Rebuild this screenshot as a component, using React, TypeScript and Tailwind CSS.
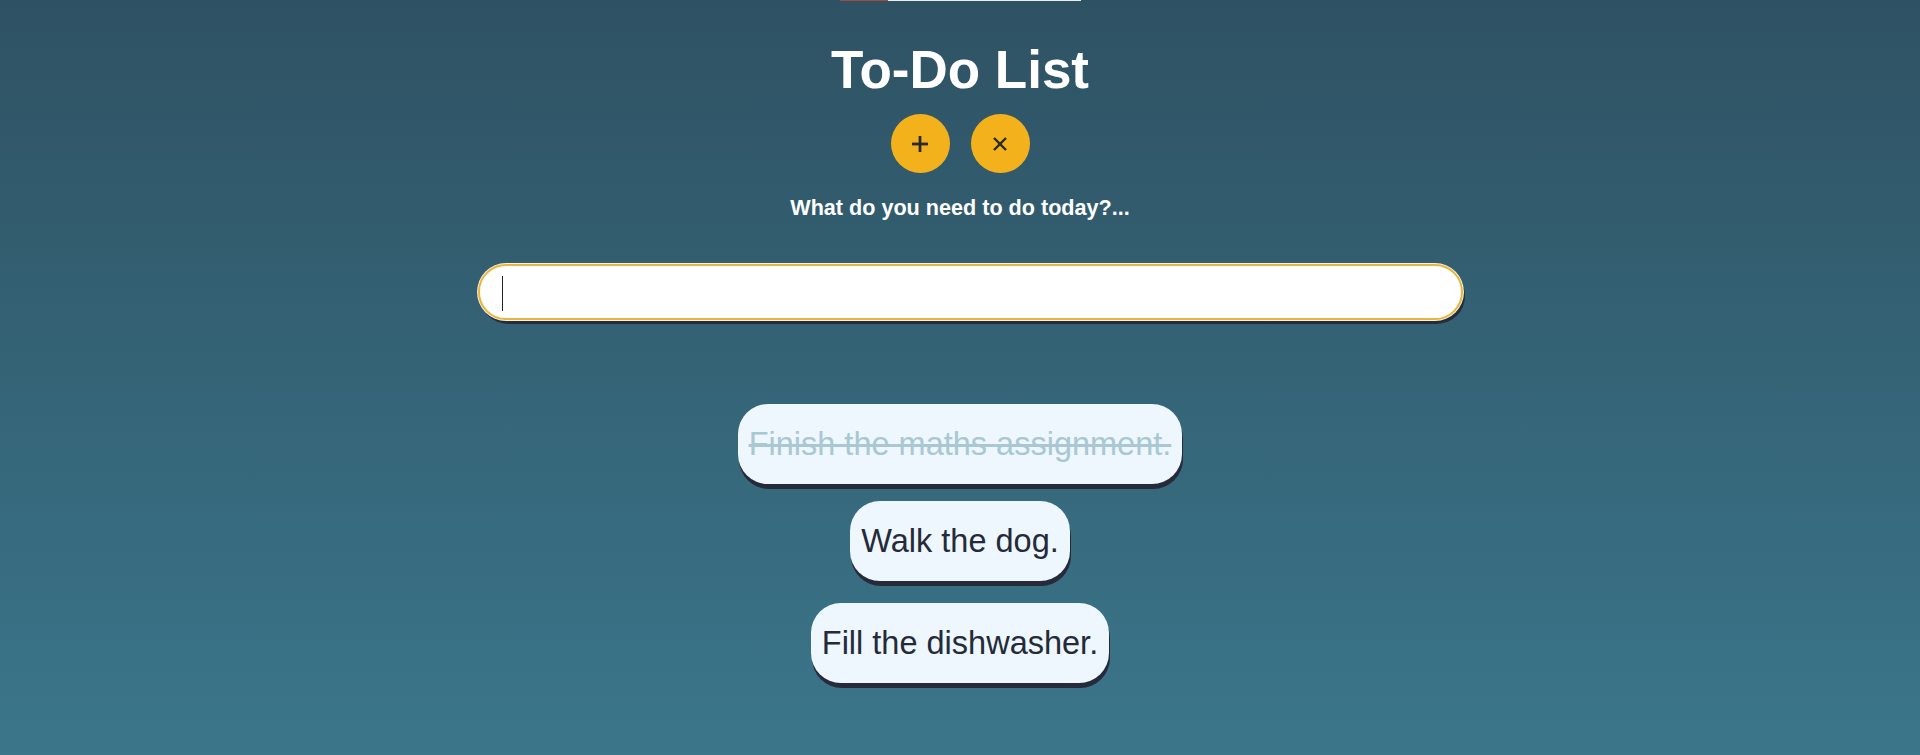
import { useState } from 'react';

const TODOS = [
  { id: 1, text: 'Finish the maths assignment.', done: true, gap: 'mt-0' },
  { id: 2, text: 'Walk the dog.', done: false, gap: 'mt-[17px]' },
  { id: 3, text: 'Fill the dishwasher.', done: false, gap: 'mt-[22px]' },
];

function PlusIcon() {
  return (
    <svg width="18" height="18" viewBox="0 0 18 18" fill="none" stroke="#2c2924" strokeWidth="2.8" strokeLinecap="butt">
      <line x1="9" y1="1" x2="9" y2="17" />
      <line x1="1" y1="9" x2="17" y2="9" />
    </svg>
  );
}

function CloseIcon() {
  return (
    <svg width="14" height="14" viewBox="0 0 14 14" fill="none" stroke="#2c2924" strokeWidth="2.4" strokeLinecap="butt">
      <line x1="1" y1="1" x2="13" y2="13" />
      <line x1="13" y1="1" x2="1" y2="13" />
    </svg>
  );
}

export default function App() {
  const [value, setValue] = useState('');

  return (
    <div className="min-h-[755px] w-full bg-gradient-to-b from-[#2e5263] to-[#3b768b] font-['Liberation_Sans',Arial,sans-serif] flex flex-col items-center">
      {/* ── top strip ── */}
      <div className="flex h-px">
        <div className="w-[48px] bg-[#a24a43]" />
        <div className="w-[193px] bg-[#e9eef0]" />
      </div>

      {/* ── header ── */}
      <h1 className="mt-[39px] text-[53px] leading-[60px] font-bold text-white">To-Do List</h1>

      <div className="mt-[14px] flex gap-[21px]">
        <button className="flex h-[59px] w-[59px] items-center justify-center rounded-full bg-[#f3b21b]">
          <PlusIcon />
        </button>
        <button className="flex h-[59px] w-[59px] items-center justify-center rounded-full bg-[#f3b21b]">
          <CloseIcon />
        </button>
      </div>

      <p className="mt-[23px] text-[21.6px] leading-[24px] font-bold text-white">What do you need to do today?...</p>

      {/* ── input ── */}
      <div className="mt-[44px] w-full flex justify-center">
        <div className="relative ml-[21px] w-[985px]">
          <input
            value={value}
            onChange={(e) => setValue(e.target.value)}
            className="h-[56px] w-full rounded-full border-2 border-[#eab53a] bg-white px-[24px] text-[24px] text-[#252a3a] caret-transparent outline-none shadow-[0_0_0_1px_#f4f1e6,2px_4px_0_#252d3b]"
          />
          {value === '' && <div className="absolute left-[24px] top-[12px] h-[35px] w-px bg-[#222]" />}
        </div>
      </div>

      {/* ── list ── */}
      <ul className="mt-[84px] flex flex-col items-center">
        {TODOS.map((t) => (
          <li
            key={t.id}
            className={
              t.gap +
              ' rounded-[30px] bg-[#edf7fd] px-[11px] py-[21px] text-[32.5px] leading-[38px] shadow-[1px_5px_0_#262a3a] ' +
              (t.done ? 'text-[#a9c8d3] line-through' : 'text-[#252a3a]')
            }
          >
            {t.text}
          </li>
        ))}
      </ul>
    </div>
  );
}
